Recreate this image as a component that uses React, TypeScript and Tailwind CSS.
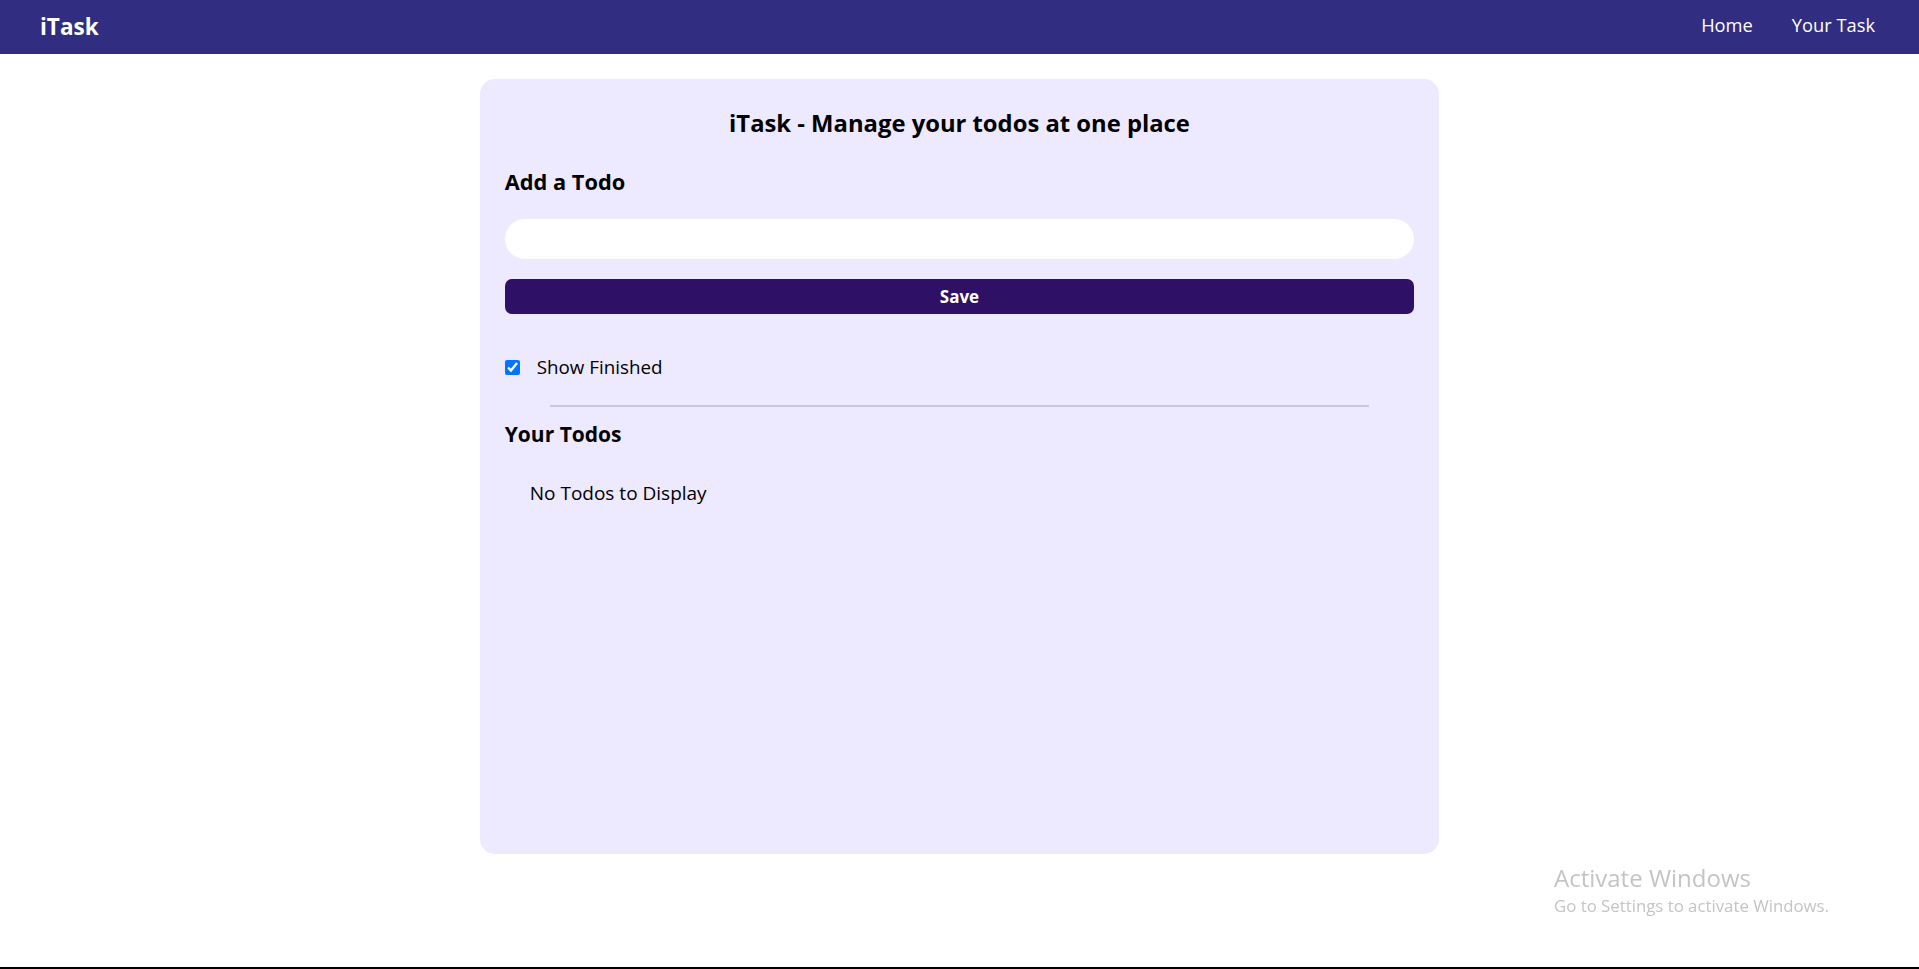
import { useState } from 'react'

export default function App() {
  const [todo, setTodo] = useState('')
  const [showFinished, setShowFinished] = useState(true)

  return (
    <div className="min-h-screen bg-white font-['Open_Sans',sans-serif] text-black">
      <nav className="flex h-[54px] items-center justify-between bg-[#312e81] text-white">
        <div className="ml-[40px] text-[22.5px] font-bold leading-none">iTask</div>
        <ul className="mb-[3px] mr-[44px] flex gap-[39px] text-[18.3px] leading-none">
          <li className="cursor-pointer">Home</li>
          <li className="cursor-pointer">Your Task</li>
        </ul>
      </nav>

      <div className="mx-auto mt-[25px] min-h-[80vh] w-1/2 rounded-[15px] bg-[#ede9fe] p-[25px]">
        <h1 className="h-[38px] text-center text-[23.8px] font-bold leading-[38px]">
          iTask - Manage your todos at one place
        </h1>

        <h2 className="mt-[26px] h-[27px] text-[21.8px] font-bold leading-[27px]">Add a Todo</h2>
        <input
          className="mt-[24px] block h-[40px] w-full rounded-full bg-white px-[20px] text-[19px] outline-none"
          value={todo}
          onChange={e => setTodo(e.target.value)}
        />
        <button className="mt-[20px] block h-[35px] w-full rounded-[7px] bg-[#2e1065] text-[17px] font-bold text-white">
          Save
        </button>

        <label className="mt-[40px] flex h-[26px] items-center text-[18.8px] leading-[26px]">
          <input
            type="checkbox"
            className="h-[15px] w-[15px] accent-[#0075ff]"
            checked={showFinished}
            onChange={() => setShowFinished(!showFinished)}
          />
          <span className="ml-[17px]">Show Finished</span>
        </label>

        <div className="mx-auto mt-[25px] h-[2px] w-[90%] bg-[#cbc7d9]" />

        <h2 className="mt-[14px] h-[27px] text-[21px] font-bold leading-[27px]">Your Todos</h2>
        <div className="ml-[25px] mt-[30px] h-[30px] text-[19px] leading-[30px]">No Todos to Display</div>
      </div>

      <div className="pointer-events-none fixed bottom-[52px] left-[1554px] font-['Open_Sans',sans-serif] text-[#c4c4c4]">
        <div className="text-[24px] leading-[30px]">Activate Windows</div>
        <div className="mt-[2px] text-[16.8px] leading-[22px]">Go to Settings to activate Windows.</div>
      </div>
      <div className="fixed bottom-0 left-0 h-[2px] w-full bg-black" />
    </div>
  )
}
